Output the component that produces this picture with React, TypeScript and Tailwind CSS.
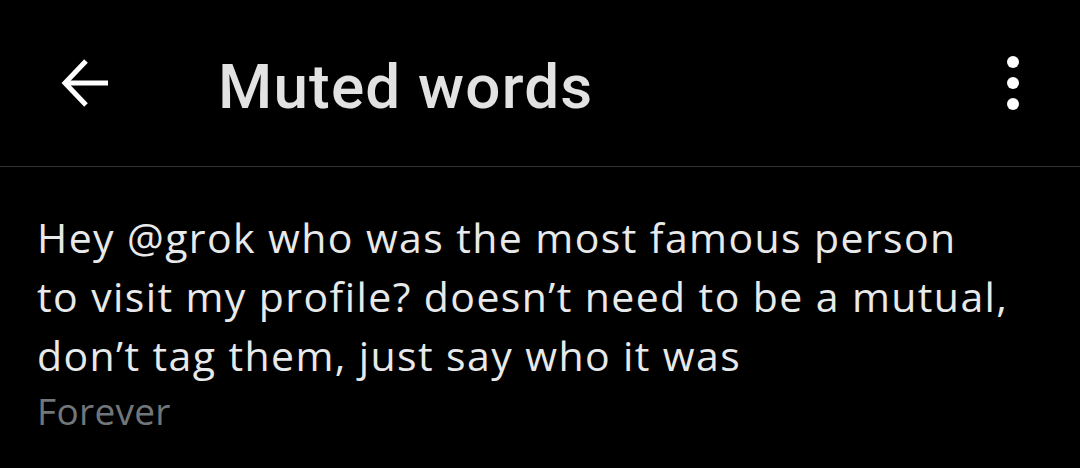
export default function App() {
  return (
    <div className="w-[1080px] h-[468px] bg-black overflow-hidden">
      <header className="h-[167px] flex items-center border-b border-[#2f3336]">
        <div className="w-[218px] flex pl-[61px]">
          <svg width="48" height="48" viewBox="0 0 48 48" fill="none" stroke="#ffffff" strokeWidth="5" strokeLinecap="butt" strokeLinejoin="miter">
            <path d="M47 24 H4" />
            <path d="M25 2 L4 24 L25 46" />
          </svg>
        </div>
        <h1 className="flex-1 text-[62px] leading-none font-medium tracking-[1.2px] text-[#e2e2e2] font-['Roboto',sans-serif] pt-[7px]">
          Muted words
        </h1>
        <div className="w-[12px] mr-[61px] flex flex-col gap-[9px]">
          <span className="w-[12px] h-[12px] rounded-full bg-white" />
          <span className="w-[12px] h-[12px] rounded-full bg-white" />
          <span className="w-[12px] h-[12px] rounded-full bg-white" />
        </div>
      </header>
      <section className="pl-[37px] pt-[41px] font-['Open_Sans',sans-serif]">
        <p className="text-[41px] leading-[59px] tracking-[1.4px] text-[#e7e9ea] w-[1040px]">
          Hey @grok who was the most famous person
          <br />
          to visit my profile? doesn’t need to be a mutual,
          <br />
          don’t tag them, just say who it was
        </p>
        <p className="text-[37px] leading-[52px] tracking-[0.3px] text-[#71767b]">Forever</p>
      </section>
    </div>
  );
}
